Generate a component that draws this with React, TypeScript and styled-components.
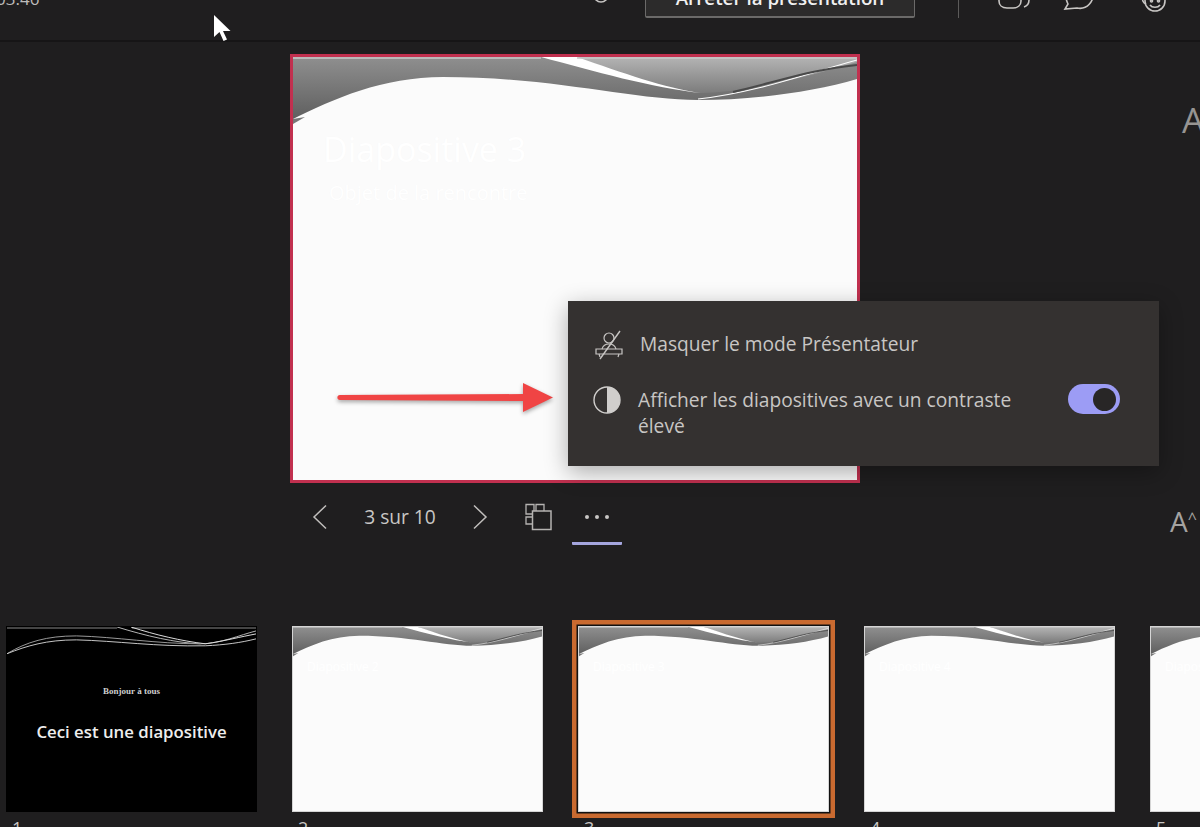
import React from 'react';
import styled, { createGlobalStyle } from 'styled-components';

const GlobalStyle = createGlobalStyle`
  html, body {
    margin: 0;
    padding: 0;
    background: #1f1e1f;
  }
`;

const Page = styled.div`
  position: relative;
  display: flex;
  flex-direction: column;
  width: 1200px;
  height: 827px;
  overflow: hidden;
  background: #1f1e1f;
  color: #c8c6c4;
  font-family: 'Open Sans', 'Noto Sans', sans-serif;
`;

const TopBar = styled.header`
  display: flex;
  align-items: flex-end;
  flex: 0 0 auto;
  height: 42px;
  padding-bottom: 22px;
  box-sizing: border-box;
  overflow: hidden;
  border-bottom: 2px solid #161516;
`;

const Clock = styled.span`
  margin-left: -4px;
  margin-bottom: 8px;
  font-size: 17px;
  line-height: 23px;
  color: #bdbbb9;
`;

const Spacer = styled.div<{ $width?: number }>`
  flex: ${({ $width }) => ($width ? `0 0 ${$width}px` : '1')};
`;

const StopButton = styled.button`
  flex: 0 0 auto;
  width: 270px;
  height: 40px;
  margin-left: 36px;
  border: 1px solid #6b6a69;
  border-bottom-width: 2px;
  border-radius: 2px;
  background: #2c2b2b;
  color: #f0f0f0;
  font-family: inherit;
  font-size: 18.8px;
  font-weight: 600;
  padding: 0;
`;

const BarRule = styled.div`
  width: 1px;
  height: 40px;
  margin-left: 43px;
  background: #5c5b5a;
`;

const TopIcon = styled.svg<{ $gap: number; $lift: number }>`
  flex: 0 0 auto;
  margin-left: ${({ $gap }) => $gap}px;
  margin-bottom: ${({ $lift }) => $lift}px;
  fill: none;
  stroke: #c8c6c4;
  stroke-width: 1.6;
`;

const Stage = styled.main`
  position: relative;
  display: flex;
  flex: 0 0 auto;
  height: 584px;
  padding: 12px 0 0 290px;
  box-sizing: border-box;
`;

const SlideColumn = styled.section`
  display: flex;
  flex-direction: column;
  width: 570px;
`;

const SlideFrame = styled.div`
  position: relative;
  width: 570px;
  height: 429px;
  box-sizing: border-box;
  border: 3px solid #c1304f;
  background: #fbfbfb;
  padding: 70px 0 0 30px;
  overflow: hidden;
`;

const Art = styled.svg`
  position: absolute;
  inset: 0;
  width: 100%;
  height: 100%;
`;

const GhostTitle = styled.div`
  position: relative;
  font-size: 34px;
  line-height: 44px;
  color: #ffffff;
  text-shadow: 0 0 1px #f6f6f6;
`;

const GhostSubtitle = styled.div`
  position: relative;
  margin: 8px 0 0 6px;
  font-size: 20px;
  line-height: 28px;
  color: #ffffff;
  text-shadow: 0 0 1px #f6f6f6;
`;

const Controls = styled.nav`
  display: flex;
  align-items: stretch;
  height: 57px;
  margin-top: 5px;
  padding-left: 5px;
`;

const ControlButton = styled.div<{ $width: number; $gap?: number; $active?: boolean }>`
  display: flex;
  align-items: center;
  justify-content: center;
  box-sizing: border-box;
  width: ${({ $width }) => $width}px;
  margin-left: ${({ $gap }) => $gap || 0}px;
  padding-top: ${({ $active }) => ($active ? 4 : 0)}px;
  border-bottom: ${({ $active }) => ($active ? '3px solid #a4a5dd' : '0')};
  border-radius: 0 0 1px 1px;
`;

const SlideCount = styled.span`
  width: 110px;
  align-self: center;
  text-align: center;
  font-size: 19.2px;
  line-height: 28px;
  color: #c8c6c4;
`;

const SideColumn = styled.aside`
  display: flex;
  flex-direction: column;
  justify-content: space-between;
  width: 30px;
  margin-left: auto;
  height: 484px;
  padding-top: 46px;
  box-sizing: border-box;
  color: #969492;
`;

const BigA = styled.span`
  padding-left: 12px;
  font-size: 35px;
  line-height: 40px;
  font-weight: 400;
  white-space: nowrap;
`;

const SmallA = styled.span`
  font-size: 28px;
  line-height: 34px;
  font-weight: 400;
  white-space: nowrap;
  color: #a5a3a1;
`;

const Caret = styled.span`
  display: inline-block;
  font-size: 16px;
  vertical-align: 8px;
`;

const Popover = styled.div`
  position: absolute;
  top: 259px;
  left: 568px;
  display: flex;
  flex-direction: column;
  gap: 26px;
  width: 591px;
  height: 165px;
  box-sizing: border-box;
  padding: 29px 39px 0 25px;
  background: #343130;
  box-shadow: 0 6px 22px rgba(0, 0, 0, 0.32);
`;

const MenuRow = styled.div<{ $inset?: number }>`
  display: flex;
  align-items: flex-start;
  gap: 17px;
  padding-left: ${({ $inset }) => $inset || 0}px;
  font-size: 19.2px;
  line-height: 26px;
  color: #c8c6c4;
`;

const MenuText = styled.span<{ $width?: number }>`
  width: ${({ $width }) => ($width ? `${$width}px` : 'auto')};
  margin-top: 1px;
`;

const Toggle = styled.div`
  display: flex;
  align-items: center;
  justify-content: flex-end;
  flex: 0 0 auto;
  width: 52px;
  height: 30px;
  margin: -2px 0 0 auto;
  box-sizing: border-box;
  padding-right: 4px;
  border-radius: 15px;
  background: #9c9cf5;
`;

const Knob = styled.div`
  width: 23px;
  height: 23px;
  border-radius: 50%;
  background: #282626;
`;

const ArrowMark = styled.svg`
  position: absolute;
  top: 335px;
  left: 332px;
  filter: drop-shadow(0 2px 2px rgba(0, 0, 0, 0.35));
`;

const Cursor = styled.svg`
  position: absolute;
  top: 15px;
  left: 213px;
`;

const Strip = styled.section`
  display: flex;
  flex: 0 0 auto;
  gap: 35px;
  padding-left: 6px;
`;

const ThumbItem = styled.div`
  flex: 0 0 auto;
  width: 251px;
`;

const ThumbFrame = styled.div<{ $dark?: boolean; $selected?: boolean }>`
  position: relative;
  width: 251px;
  height: 186px;
  box-sizing: border-box;
  background: ${({ $dark }) => ($dark ? '#000000' : '#fbfbfb')};
  border: 1px solid ${({ $dark }) => ($dark ? '#000000' : '#d5d5d5')};
  box-shadow: ${({ $selected }) => ($selected ? '0 0 0 1.5px #111111, 0 0 0 6px #c96a30' : 'none')};
  display: flex;
  flex-direction: column;
  align-items: center;
`;

const ThumbHeading = styled.div`
  position: relative;
  margin-top: 58px;
  font-family: 'Liberation Serif', serif;
  font-size: 9px;
  line-height: 12px;
  font-weight: 700;
  color: #cfcfcf;
`;

const ThumbTitle = styled.div`
  position: relative;
  margin-top: 24px;
  font-size: 16.8px;
  line-height: 22px;
  font-weight: 600;
  color: #eeeeee;
`;

const ThumbGhost = styled.div`
  position: relative;
  align-self: flex-start;
  margin: 32px 0 0 14px;
  font-size: 12px;
  line-height: 16px;
  color: #ffffff;
`;

const ThumbNumber = styled.div`
  margin: 4px 0 0 6px;
  font-size: 18px;
  line-height: 24px;
  color: #c8c6c4;
`;

const SlideArt = () => (
  <Art viewBox="0 0 564 423" preserveAspectRatio="none">
    <defs>
      <linearGradient id="bandDark" x1="0" y1="0" x2="0" y2="1">
        <stop offset="0" stopColor="#8f8f8f" />
        <stop offset="1" stopColor="#5f5f5f" />
      </linearGradient>
      <linearGradient id="bandLight" x1="0" y1="0" x2="0" y2="1">
        <stop offset="0" stopColor="#b4b4b4" />
        <stop offset="1" stopColor="#7c7c7c" />
      </linearGradient>
    </defs>
    <path d="M0 0H564V22C520 35 460 43 405 43C340 43 260 20 150 20C90 20 40 42 0 62Z" fill="url(#bandDark)" />
    <path d="M282 0H564V5C520 18 460 35 408 36C370 33 330 16 282 0Z" fill="url(#bandLight)" />
    <path d="M248 0H284C330 16 372 31 408 36C360 31 300 14 248 0Z" fill="#ffffff" />
    <path d="M0 1H248M284 1H564" fill="none" stroke="#c9c9c9" strokeWidth="1.5" />
    <path d="M405 42C460 36 510 18 564 3" fill="none" stroke="#ffffff" strokeWidth="1.2" />
    <path d="M440 35C480 26 520 12 564 8" fill="none" stroke="#4a4a4a" strokeWidth="2" />
    <path d="M0 62L12 60L0 67Z" fill="#777777" />
  </Art>
);

const DarkArt = () => (
  <Art viewBox="0 0 251 186" preserveAspectRatio="none">
    <path d="M0 1H111M126 1H251" stroke="#8a8a8a" strokeWidth="1.2" fill="none" />
    <path d="M111 0C140 9 170 16 195 17C215 17 235 8 251 4" stroke="#b5b5b5" strokeWidth="1" fill="none" />
    <path d="M125 0C150 8 175 14 200 17C220 14 235 10 251 7" stroke="#dddddd" strokeWidth="1" fill="none" />
    <path d="M0 27C20 15 40 9 70 9C110 10 150 17 195 17" stroke="#9a9a9a" strokeWidth="1" fill="none" />
    <path d="M0 27C20 19 40 13 70 13C110 14 150 20 200 19C220 18 235 16 251 12" stroke="#c6c6c6" strokeWidth="1" fill="none" />
  </Art>
);

const ChevronIcon = ({ right }: { right?: boolean }) => (
  <svg width="16" height="26" viewBox="0 0 16 26" fill="none" stroke="#c0bebc" strokeWidth="1.5">
    <path d={right ? 'M2 1.5L14 13L2 24.5' : 'M14 1.5L2 13L14 24.5'} />
  </svg>
);

const LayoutIcon = () => (
  <svg width="28" height="28" viewBox="0 0 28 28" fill="none" stroke="#b5b3b1" strokeWidth="1.3">
    <path d="M8 11H2V1.5H10V8" />
    <path d="M12 8V1.5H20V8" />
    <path d="M8 14H2V21H8" />
    <rect x="8.5" y="8" width="18.5" height="18.5" strokeWidth="1.5" />
  </svg>
);

const MoreIcon = () => (
  <svg width="26" height="6" viewBox="0 0 26 6" fill="#c8c6c4">
    <circle cx="3" cy="3" r="2" />
    <circle cx="13" cy="3" r="2" />
    <circle cx="23" cy="3" r="2" />
  </svg>
);

const PresenterOffIcon = () => (
  <svg width="28" height="30" viewBox="0 0 28 30" fill="none" stroke="#c8c6c4" strokeWidth="1.2" style={{ flex: '0 0 auto' }}>
    <circle cx="14" cy="8" r="5" />
    <path d="M7 19C8 15.5 11 14 14 14C17 14 20 15.5 21 19" />
    <path d="M1 19H27V24H1Z" />
    <path d="M4 24L5 27M24 24L23 27" />
    <path d="M25 1L5 29" strokeWidth="1.4" />
  </svg>
);

const ContrastIcon = () => (
  <svg width="28" height="28" viewBox="0 0 28 28" style={{ flex: '0 0 auto' }}>
    <circle cx="14" cy="14" r="13" fill="none" stroke="#d0cecc" strokeWidth="1.4" />
    <path d="M14 1A13 13 0 0 1 14 27Z" fill="#d0cecc" />
  </svg>
);

const thumbs = [
  { id: 1, ghost: '' },
  { id: 2, ghost: 'Diapositive 2' },
  { id: 3, ghost: 'Diapositive 3' },
  { id: 4, ghost: 'Diapositive 4' },
  { id: 5, ghost: 'Diapositive 5' },
];

export default function App() {
  return (
    <Page>
      <GlobalStyle />
      <TopBar>
        <Clock>03:46</Clock>
        <Spacer />
        <TopIcon $gap={0} $lift={13} width="16" height="24" viewBox="0 0 16 24">
          <circle cx="8" cy="14" r="7" />
        </TopIcon>
        <StopButton>Arrêter la présentation</StopButton>
        <BarRule />
        <TopIcon $gap={38} $lift={9} width="34" height="30" viewBox="0 0 34 30">
          <path d="M2 6V22C2 26 5 29 10 29H16C21 29 24 26 24 22V6" />
          <path d="M27 28C30 27 32 25 32 21V10" />
        </TopIcon>
        <TopIcon $gap={32} $lift={8} width="34" height="30" viewBox="0 0 34 30">
          <path d="M4 10C2 15 3 20 5 24L2 29L14 28C24 30 31 22 31 10" />
        </TopIcon>
        <TopIcon $gap={41} $lift={6} width="30" height="30" viewBox="0 0 30 30">
          <circle cx="17" cy="19" r="10" />
          <circle cx="13.5" cy="19" r="1" />
          <circle cx="20.5" cy="19" r="1" />
          <path d="M12 23C14 26 20 26 22 23" />
          <path d="M8 22C5 21 4 18 5 15" />
        </TopIcon>
        <Spacer $width={32} />
      </TopBar>

      <Stage>
        <SlideColumn>
          <SlideFrame>
            <SlideArt />
            <GhostTitle>Diapositive 3</GhostTitle>
            <GhostSubtitle>Objet de la rencontre</GhostSubtitle>
          </SlideFrame>
          <Controls>
            <ControlButton $width={50}>
              <ChevronIcon />
            </ControlButton>
            <SlideCount>3 sur 10</SlideCount>
            <ControlButton $width={50}>
              <ChevronIcon right />
            </ControlButton>
            <ControlButton $width={50} $gap={8}>
              <LayoutIcon />
            </ControlButton>
            <ControlButton $width={50} $gap={9} $active>
              <MoreIcon />
            </ControlButton>
          </Controls>
        </SlideColumn>

        <SideColumn>
          <BigA>A</BigA>
          <SmallA>
            A<Caret>^</Caret>
          </SmallA>
        </SideColumn>

        <ArrowMark width="228" height="40" viewBox="0 0 228 40">
          <path d="M8 18L192 17V24L8 23C4.5 23 4.5 18 8 18Z" fill="#f04444" />
          <path d="M191 6L221 20.5L191 35Z" fill="#f04444" />
        </ArrowMark>

        <Popover>
          <MenuRow $inset={2}>
            <PresenterOffIcon />
            <MenuText>Masquer le mode Présentateur</MenuText>
          </MenuRow>
          <MenuRow>
            <ContrastIcon />
            <MenuText $width={390}>Afficher les diapositives avec un contraste élevé</MenuText>
            <Toggle>
              <Knob />
            </Toggle>
          </MenuRow>
        </Popover>
      </Stage>

      <Strip>
        {thumbs.map((t) => (
          <ThumbItem key={t.id}>
            <ThumbFrame $dark={t.id === 1} $selected={t.id === 3}>
              {t.id === 1 ? <DarkArt /> : <SlideArt />}
              {t.id === 1 ? (
                <>
                  <ThumbHeading>Bonjour à tous</ThumbHeading>
                  <ThumbTitle>Ceci est une diapositive</ThumbTitle>
                </>
              ) : (
                <ThumbGhost>{t.ghost}</ThumbGhost>
              )}
            </ThumbFrame>
            <ThumbNumber>{t.id}</ThumbNumber>
          </ThumbItem>
        ))}
      </Strip>

      <Cursor width="20" height="28" viewBox="0 0 20 28">
        <path d="M1 0V22L6.5 17L10.5 26L14 24.5L10 16H17.5Z" fill="#ffffff" />
      </Cursor>
    </Page>
  );
}
